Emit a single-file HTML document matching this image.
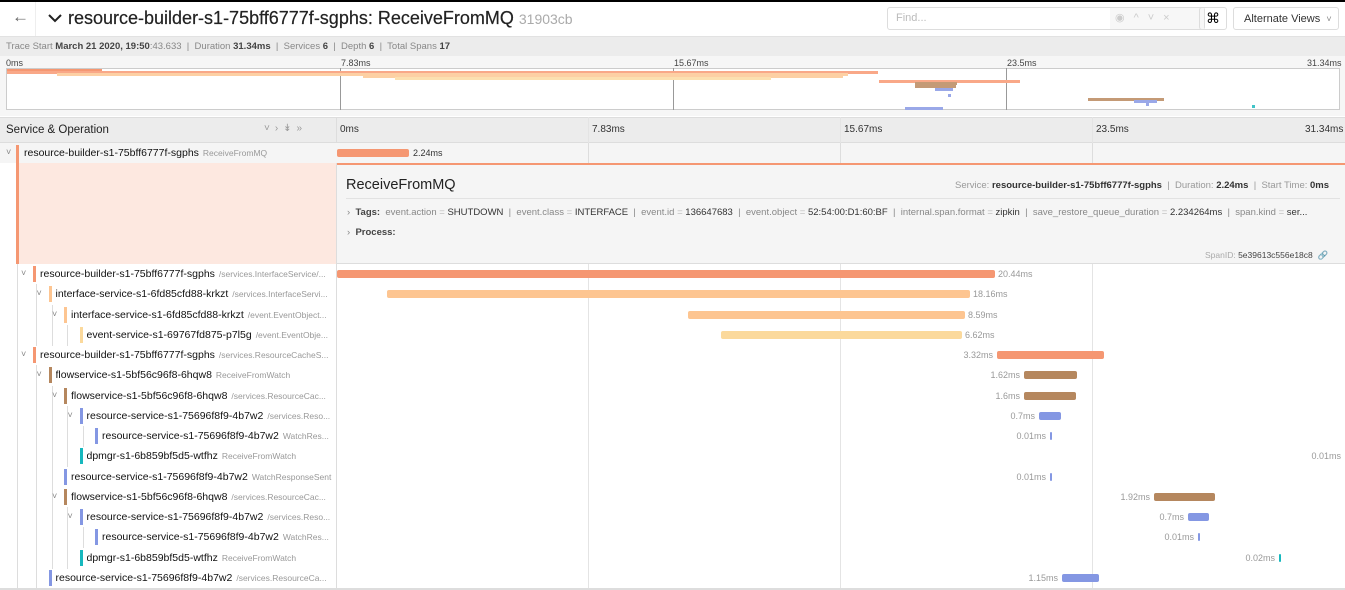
<!DOCTYPE html>
<html><head><meta charset="utf-8"><style>
*{box-sizing:border-box;margin:0;padding:0}
body{width:1345px;height:590px;overflow:hidden;background:#fff;font-family:"Liberation Sans",sans-serif;color:#000;position:relative}
.a{position:absolute}
.t{white-space:nowrap}
.bar{position:absolute;height:8px;border-radius:2px}
.lbl{position:absolute;font-size:9px;color:#999;white-space:nowrap}
.nm{position:absolute;top:4px;font-size:10.5px;white-space:nowrap;color:#111}
.op{font-size:8.5px;color:#999;margin-left:4px}
.cb{position:absolute;top:2px;width:3px;height:16px}
.chev{position:absolute;top:4px;font-size:9px;color:#888}
.guide{position:absolute;width:1px;background:#ddd}
.mb{position:absolute;height:3px}
</style></head><body>
<div class="a" style="left:0;top:0;width:1345px;height:2px;background:#000"></div>
<div class="a" style="left:0;top:2px;width:36px;height:34px;border-right:1px solid #eee"></div>
<div class="a t" style="left:12px;top:7px;font-size:17px;color:#666">&#8592;</div>
<svg class="a" style="left:48px;top:13px" width="14" height="10"><path d="M1 2 L7 8 L13 2" stroke="#222" stroke-width="2" fill="none"/></svg>
<div class="a t" style="left:68px;top:8px;font-size:18px;color:#222;-webkit-text-stroke:0.2px #222">resource-builder-s1-75bff6777f-sgphs: ReceiveFromMQ <span style="font-size:14px;color:#aaa;-webkit-text-stroke:0">31903cb</span></div>
<div class="a" style="left:887px;top:7px;width:318px;height:23px;border:1px solid #ddd;border-radius:3px"></div>
<div class="a" style="left:1110px;top:8px;width:94px;height:21px;background:#f7f7f7"></div>
<div class="a t" style="left:896px;top:12px;font-size:11px;color:#bbb">Find...</div>
<div class="a t" style="left:1115px;top:11px;font-size:11px;color:#ccc;letter-spacing:9px">◉^˅×</div>
<div class="a" style="left:1199px;top:7px;width:28px;height:23px;border:1px solid #ddd;border-radius:3px;font-size:14px;text-align:center;line-height:20px">⌘</div>
<div class="a t" style="left:1233px;top:7px;width:106px;height:23px;border:1px solid #ddd;border-radius:3px;font-size:11px;padding:5px 0 0 10px;color:#333">Alternate Views &nbsp;<span style="color:#888;font-size:9px">˅</span></div>
<div class="a" style="left:0;top:36px;width:1345px;height:20px;background:#ececec;border-top:1px solid #e2e2e2"></div>
<div class="a t" style="left:6px;top:41px;font-size:9.5px;color:#888">Trace Start <b style="color:#444">March 21 2020, 19:50</b>:43.633 &nbsp;|&nbsp; Duration <b style="color:#444">31.34ms</b> &nbsp;|&nbsp; Services <b style="color:#444">6</b> &nbsp;|&nbsp; Depth <b style="color:#444">6</b> &nbsp;|&nbsp; Total Spans <b style="color:#444">17</b></div>
<div class="a" style="left:0;top:56px;width:1345px;height:60px;background:#f6f6f6"></div>
<div class="a t" style="left:6px;top:58px;font-size:9px;color:#444">0ms</div>
<div class="a t" style="left:341px;top:58px;font-size:9px;color:#444">7.83ms</div>
<div class="a t" style="left:674px;top:58px;font-size:9px;color:#444">15.67ms</div>
<div class="a t" style="left:1007px;top:58px;font-size:9px;color:#444">23.5ms</div>
<div class="a t" style="left:1307px;top:58px;font-size:9px;color:#444">31.34ms</div>
<div class="a" style="left:6px;top:68px;width:1334px;height:42px;background:#fff;border:1px solid #ccc"></div>
<div class="a" style="left:340px;top:68px;width:1px;height:42px;background:#999"></div>
<div class="a" style="left:673px;top:68px;width:1px;height:42px;background:#999"></div>
<div class="a" style="left:1006px;top:68px;width:1px;height:42px;background:#999"></div>
<div class="mb" style="left:7px;top:69px;width:95px;background:#f59772"></div>
<div class="mb" style="left:7px;top:71px;width:871px;background:#f9a888"></div>
<div class="mb" style="left:57px;top:73px;width:791px;background:#fdd0a4"></div>
<div class="mb" style="left:363px;top:75px;width:480px;background:#fdd0a4"></div>
<div class="mb" style="left:395px;top:77px;width:376px;background:#fce0b0"></div>
<div class="mb" style="left:879px;top:80px;width:141px;background:#f9a888"></div>
<div class="mb" style="left:915px;top:82px;width:42px;height:3px;background:#c49a76"></div>
<div class="mb" style="left:915px;top:85px;width:41px;background:#c49a76"></div>
<div class="mb" style="left:935px;top:88px;width:18px;background:#9aa8e8"></div>
<div class="mb" style="left:948px;top:94px;width:3px;background:#9aa8e8"></div>
<div class="mb" style="left:1088px;top:98px;width:76px;background:#c49a76"></div>
<div class="mb" style="left:1134px;top:100px;width:23px;background:#9aa8e8"></div>
<div class="mb" style="left:1146px;top:103px;width:3px;background:#9aa8e8"></div>
<div class="mb" style="left:1252px;top:105px;width:3px;background:#40c4c8"></div>
<div class="mb" style="left:905px;top:107px;width:38px;background:#9aa8e8"></div>
<div class="a" style="left:0;top:117px;width:1345px;height:26px;background:#ececec;border-top:1px solid #ddd;border-bottom:1px solid #ddd"></div>
<div class="a t" style="left:6px;top:124px;font-size:11.5px;color:#222">Service &amp; Operation</div>
<div class="a t" style="left:264px;top:123px;font-size:10px;color:#999;letter-spacing:5px">˅›&#8609;»</div>
<div class="a" style="left:336px;top:117px;width:1px;height:473px;background:#ddd"></div>
<div class="a t" style="left:340px;top:124px;font-size:10px;color:#333">0ms</div>
<div class="a t" style="left:592px;top:124px;font-size:10px;color:#333">7.83ms</div>
<div class="a t" style="left:844px;top:124px;font-size:10px;color:#333">15.67ms</div>
<div class="a t" style="left:1096px;top:124px;font-size:10px;color:#333">23.5ms</div>
<div class="a t" style="left:1305px;top:124px;font-size:10px;color:#333">31.34ms</div>
<div class="a" style="left:588px;top:117px;width:1px;height:473px;background:#e4e4e4"></div>
<div class="a" style="left:840px;top:117px;width:1px;height:473px;background:#e4e4e4"></div>
<div class="a" style="left:1092px;top:117px;width:1px;height:473px;background:#e4e4e4"></div>
<div class="a" style="left:0;top:143px;width:1345px;height:20px;background:#f5f5f5"></div>
<div class="a" style="left:588px;top:143px;width:1px;height:20px;background:#ddd"></div>
<div class="a" style="left:840px;top:143px;width:1px;height:20px;background:#ddd"></div>
<div class="a" style="left:1092px;top:143px;width:1px;height:20px;background:#ddd"></div>
<div class="chev" style="left:6px;top:147px">˅</div>
<div class="a" style="left:16px;top:145px;width:3px;height:119px;background:#f59772"></div>
<div class="nm" style="left:24px;top:147px">resource-builder-s1-75bff6777f-sgphs<span class="op">ReceiveFromMQ</span></div>
<div class="bar" style="left:337px;top:149px;width:72px;background:#f59772"></div>
<div class="lbl" style="left:413px;top:148px;color:#333">2.24ms</div>
<div class="a" style="left:19px;top:163px;width:317px;height:101px;background:#fde8e0"></div>
<div class="a" style="left:337px;top:163px;width:1008px;height:101px;background:#f5f5f5;border-top:2px solid #f59772;border-bottom:1px solid #ddd"></div>
<div class="a t" style="left:346px;top:177px;font-size:14.5px;color:#222">ReceiveFromMQ</div>
<div class="a" style="left:346px;top:198px;width:994px;height:1px;background:#e2e2e2"></div>
<div class="a t" style="left:955px;top:180px;font-size:9.5px;color:#999">Service: <b style="color:#333">resource-builder-s1-75bff6777f-sgphs</b> &nbsp;|&nbsp; Duration: <b style="color:#333">2.24ms</b> &nbsp;|&nbsp; Start Time: <b style="color:#333">0ms</b></div>
<div class="a t" style="left:347px;top:207px;font-size:9.5px;color:#888">›&nbsp; <b style="color:#444">Tags:</b>&nbsp; event.action <span style="color:#bbb">=</span> <span style="color:#333">SHUTDOWN</span> &nbsp;|&nbsp; event.class <span style="color:#bbb">=</span> <span style="color:#333">INTERFACE</span> &nbsp;|&nbsp; event.id <span style="color:#bbb">=</span> <span style="color:#333">136647683</span> &nbsp;|&nbsp; event.object <span style="color:#bbb">=</span> <span style="color:#333">52:54:00:D1:60:BF</span> &nbsp;|&nbsp; internal.span.format <span style="color:#bbb">=</span> <span style="color:#333">zipkin</span> &nbsp;|&nbsp; save_restore_queue_duration <span style="color:#bbb">=</span> <span style="color:#333">2.234264ms</span> &nbsp;|&nbsp; span.kind <span style="color:#bbb">=</span> <span style="color:#333">ser...</span></div>
<div class="a t" style="left:347px;top:227px;font-size:9.5px;color:#888">›&nbsp; <b style="color:#444">Process:</b></div>
<div class="a t" style="left:1205px;top:250px;font-size:8.5px;color:#aaa">SpanID: <span style="color:#444">5e39613c556e18c8</span> &nbsp;<span style="color:#888">&#128279;</span></div>
<div class="a" style="left:0;top:264px;width:336px;height:326px;background:#fff"></div>
<div class="a" style="left:17px;top:264px;width:1px;height:326px;background:#ddd"></div>
<div class="a" style="left:0;top:588px;width:1345px;height:2px;background:#ddd"></div>
<div id="rows"></div>
<script>
var R=[
[1,'resource-builder-s1-75bff6777f-sgphs','/services.InterfaceService/...','#f59772',337,658,'20.44ms',1,1],
[2,'interface-service-s1-6fd85cfd88-krkzt','/services.InterfaceServi...','#fdc591',387,583,'18.16ms',1,1],
[3,'interface-service-s1-6fd85cfd88-krkzt','/event.EventObject...','#fdc591',688,277,'8.59ms',1,1],
[4,'event-service-s1-69767fd875-p7l5g','/event.EventObje...','#fbd99c',721,241,'6.62ms',1,0],
[1,'resource-builder-s1-75bff6777f-sgphs','/services.ResourceCacheS...','#f59772',997,107,'3.32ms',0,1],
[2,'flowservice-s1-5bf56c96f8-6hqw8','ReceiveFromWatch','#b5875e',1024,53,'1.62ms',0,1],
[3,'flowservice-s1-5bf56c96f8-6hqw8','/services.ResourceCac...','#b5875e',1024,52,'1.6ms',0,1],
[4,'resource-service-s1-75696f8f9-4b7w2','/services.Reso...','#8497e3',1039,22,'0.7ms',0,1],
[5,'resource-service-s1-75696f8f9-4b7w2','WatchRes...','#8497e3',1050,2,'0.01ms',0,0],
[4,'dpmgr-s1-6b859bf5d5-wtfhz','ReceiveFromWatch','#17b8be',1345,0,'0.01ms',0,0],
[3,'resource-service-s1-75696f8f9-4b7w2','WatchResponseSent','#8497e3',1050,2,'0.01ms',0,0],
[3,'flowservice-s1-5bf56c96f8-6hqw8','/services.ResourceCac...','#b5875e',1154,61,'1.92ms',0,1],
[4,'resource-service-s1-75696f8f9-4b7w2','/services.Reso...','#8497e3',1188,21,'0.7ms',0,1],
[5,'resource-service-s1-75696f8f9-4b7w2','WatchRes...','#8497e3',1198,2,'0.01ms',0,0],
[4,'dpmgr-s1-6b859bf5d5-wtfhz','ReceiveFromWatch','#17b8be',1279,2,'0.02ms',0,0],
[2,'resource-service-s1-75696f8f9-4b7w2','/services.ResourceCa...','#8497e3',1062,37,'1.15ms',0,0]];
var h='';
R.forEach(function(r,i){
 var y=264+i*20.25, lv=r[0], bx=33+(lv-1)*15.5;
 for(var k=1;k<lv;k++){h+='<div class="guide" style="left:'+(36+(k-1)*15.5)+'px;top:'+y+'px;height:21px"></div>';}
 if(r[8])h+='<div class="chev" style="left:'+(bx-12)+'px;top:'+(y+4)+'px">˅</div>';
 h+='<div class="cb" style="left:'+bx+'px;top:'+(y+2)+'px;background:'+r[3]+'"></div>';
 h+='<div class="nm" style="left:'+(bx+7)+'px;top:'+(y+4)+'px;width:'+(333-bx-7)+'px;overflow:hidden">'+r[1]+'<span class="op">'+r[2]+'</span></div>';
 if(r[5]>0)h+='<div class="bar" style="left:'+r[4]+'px;top:'+(y+6)+'px;width:'+r[5]+'px;background:'+r[3]+'"></div>';
 if(r[7])h+='<div class="lbl" style="left:'+(r[4]+r[5]+3)+'px;top:'+(y+5)+'px">'+r[6]+'</div>';
 else{var rx=r[4]-4;h+='<div class="lbl" style="right:'+(1345-rx)+'px;top:'+(y+5)+'px">'+r[6]+'</div>';}
});
document.getElementById('rows').innerHTML=h;
</script>
</body></html>
